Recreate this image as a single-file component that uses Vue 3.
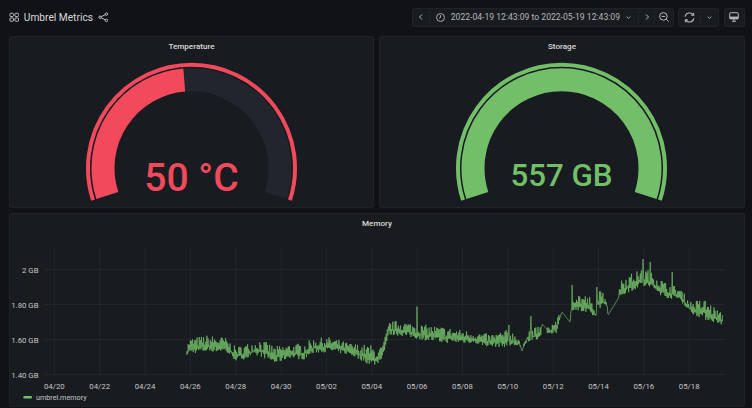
<template>
  <main class="dash">
    <header class="topbar">
      <div class="title-wrap">
        <svg class="ic-apps" viewBox="0 0 12 12">
          <rect x="1" y="1.4" width="4.2" height="3.8" rx="1.2" />
          <rect x="6.8" y="1.4" width="4.2" height="3.8" rx="1.2" />
          <rect x="1" y="6.8" width="4.2" height="3.8" rx="1.2" />
          <rect x="6.8" y="6.8" width="4.2" height="3.8" rx="1.2" />
        </svg>
        <h1>Umbrel Metrics</h1>
        <svg class="ic-share" viewBox="0 0 12 12">
          <circle cx="9.6" cy="2.4" r="1.4" />
          <circle cx="2.4" cy="6" r="1.4" />
          <circle cx="9.6" cy="9.6" r="1.4" />
          <path d="M3.7 5.3 8.3 3.1M3.7 6.7 8.3 8.9" />
        </svg>
      </div>
      <div class="tools">
        <div class="group">
          <button class="seg seg-arrow">
            <svg viewBox="0 0 10 10"><path d="M6 2.5 3.5 5 6 7.5" /></svg>
          </button>
          <button class="seg seg-range">
            <svg class="ic-clock" viewBox="0 0 12 12">
              <circle cx="6" cy="6" r="4.3" />
              <path d="M6 3.5V6L4.4 7" />
            </svg>
            <span>2022-04-19 12:43:09 to 2022-05-19 12:43:09</span>
            <svg class="ic-chev" viewBox="0 0 10 10"><path d="M3 4 5 6 7 4" /></svg>
          </button>
          <button class="seg seg-arrow">
            <svg viewBox="0 0 10 10"><path d="M4 2.5 6.5 5 4 7.5" /></svg>
          </button>
          <button class="seg seg-zoom">
            <svg viewBox="0 0 12 12">
              <circle cx="5.4" cy="5.4" r="3.8" />
              <path d="M3.6 5.4H7.2M8.2 8.2 10.6 10.6" />
            </svg>
          </button>
        </div>
        <div class="group">
          <button class="seg seg-refresh">
            <svg viewBox="0 0 12 12">
              <path d="M2 5.2A4.1 4.1 0 0 1 9.4 3.6M10 6.8A4.1 4.1 0 0 1 2.6 8.4" />
              <path d="M9.8 1.6V3.9H7.5M2.2 10.4V8.1H4.5" />
            </svg>
          </button>
          <button class="seg seg-more">
            <svg class="ic-chev" viewBox="0 0 10 10"><path d="M3 4 5 6 7 4" /></svg>
          </button>
        </div>
        <div class="group">
          <button class="seg seg-tv">
            <svg viewBox="0 0 12 12">
              <rect x="1.7" y="1.7" width="8.6" height="6.2" rx="1" />
              <path class="tv-band" d="M1.7 5.6H10.3V7.9H1.7Z" />
              <path d="M4 10.3H8M6 8V10.3" />
            </svg>
          </button>
        </div>
      </div>
    </header>

    <section class="gauges">
      <article v-for="g in gauges" :key="g.title" class="panel gauge-panel">
        <h2>{{ g.title }}</h2>
        <svg class="gauge" viewBox="0 0 365 172">
          <path :d="ring" class="g-ring" :stroke="g.color" />
          <path :d="track" class="g-bar" stroke="#22252b" />
          <path :d="g.bar" class="g-bar" :stroke="g.color" />
          <text x="182.5" :y="g.base" :font-size="g.size" :fill="g.color" text-anchor="middle">{{ g.value }}</text>
        </svg>
      </article>
    </section>

    <section class="panel chart-panel">
      <h2>Memory</h2>
      <svg class="chart" viewBox="0 0 736 194">
        <g class="grid">
          <path v-for="x in gridX" :key="x.label" :d="`M${x.pos} 34V164`" />
          <path v-for="y in gridY" :key="y.label" :d="`M36 ${y.pos}H715.5`" />
        </g>
        <text v-for="y in gridY" :key="y.label" :x="29.5" :y="y.pos + 3" class="tick" text-anchor="end">{{ y.label }}</text>
        <text v-for="x in gridX" :key="x.label" :x="x.pos" y="175.5" class="tick" text-anchor="middle">{{ x.label }}</text>
        <path :d="series" class="line" />
        <rect x="14.3" y="183" width="8.7" height="2.5" rx="1.2" fill="#73bf69" />
        <text x="27" y="187.3" class="tick legend">umbrel.memory</text>
      </svg>
    </section>
  </main>
</template>

<script setup>
// gauge geometry, in panel coordinates
const cx = 182.5;
const cy = 132.2;

function polar(r, deg) {
  const a = (deg * Math.PI) / 180;
  return [cx + r * Math.sin(a), cy - r * Math.cos(a)];
}

function arc(r, from, to) {
  const [x1, y1] = polar(r, from);
  const [x2, y2] = polar(r, to);
  const large = to - from > 180 ? 1 : 0;
  return `M${x1.toFixed(2)} ${y1.toFixed(2)}A${r} ${r} 0 ${large} 1 ${x2.toFixed(2)} ${y2.toFixed(2)}`;
}

const ring = arc(103.5, -108, 108);
const track = arc(88.5, -108, 108);

const gauges = [
  { title: 'Temperature', value: '50 °C', size: 39, base: 155, color: '#f2495c', bar: arc(88.5, -108, -4.7) },
  { title: 'Storage', value: '557 GB', size: 31.3, base: 150, color: '#73bf69', bar: arc(88.5, -108, 108) },
];

const xLabels = ['04/20', '04/22', '04/24', '04/26', '04/28', '04/30', '05/02', '05/04', '05/06', '05/08', '05/10', '05/12', '05/14', '05/16', '05/18'];
const gridX = xLabels.map((label, i) => ({ label, pos: 45.3 + i * 45.35 }));
const gridY = [
  { label: '2 GB', pos: 56.5 },
  { label: '1.80 GB', pos: 91.5 },
  { label: '1.60 GB', pos: 126.5 },
  { label: '1.40 GB', pos: 161.5 },
];

// rough envelope of the memory series: x, top, bottom (page coordinates)
const envelope = [
  [186, 353, 356], [189, 338, 354], [207, 335, 352], [225, 337, 352], [236, 347, 361],
  [260, 339, 356], [275, 346, 364], [290, 344, 358], [303, 343, 360], [315, 338, 353],
  [330, 337, 352], [350, 343, 355], [372, 345, 366], [378, 350, 364], [383, 344, 356],
  [389, 322, 335], [400, 320, 336], [417, 324, 339], [440, 326, 343], [470, 331, 343],
  [490, 334, 347], [510, 329, 347], [519, 337, 346], [522, 351, 351], [527, 329, 343],
  [541, 326, 338], [542, 324, 324], [546, 328, 328], [548, 327, 336], [556, 318, 334],
  [562, 312, 312], [570, 322, 322], [572, 290, 310], [590, 296, 316], [596, 316, 316],
  [598, 290, 308], [607, 294, 308], [608, 315, 315], [618, 299, 299], [621, 277, 297],
  [640, 270, 287], [650, 268, 289], [665, 282, 298], [680, 288, 300], [690, 301, 313],
  [705, 299, 320], [723, 314, 325],
];
const spikes = [[417, 306.5], [643, 259], [650, 262], [572, 285], [597, 287], [509, 325], [531, 316], [672, 272]];

function buildSeries() {
  let seed = 7;
  const rnd = () => {
    seed = (seed * 16807) % 2147483647;
    return seed / 2147483647;
  };
  const pts = [];
  let k = 0;
  let up = false;
  for (let x = 186; x <= 723; x += 0.55) {
    while (k < envelope.length - 2 && envelope[k + 1][0] < x) k++;
    const a = envelope[k];
    const b = envelope[k + 1];
    const t = Math.min(1, (x - a[0]) / (b[0] - a[0]));
    const top = a[1] + (b[1] - a[1]) * t;
    const bottom = a[2] + (b[2] - a[2]) * t;
    // zigzag between the lower part and the upper part of the band
    up = !up;
    const h = up ? 0.35 + rnd() * 0.65 : rnd() * 0.35;
    let y = bottom - (bottom - top) * h;
    const spike = spikes.find((s) => Math.abs(s[0] - x) < 0.3);
    if (spike) y = spike[1];
    // chart svg starts at page (9, 213)
    pts.push(`${(x - 9).toFixed(1)} ${(y - 213).toFixed(1)}`);
  }
  return pts;
}

const series = 'M' + buildSeries().join('L');
</script>

<style scoped>
.dash {
  width: 752px;
  height: 408px;
  overflow: hidden;
  background: #111217;
  padding: 0 7px 0 9px;
  box-sizing: border-box;
  font-family: Roboto, "Liberation Sans", sans-serif;
  color: #d8d9da;
}
.topbar {
  height: 36px;
  display: flex;
  justify-content: space-between;
  align-items: flex-start;
  padding-top: 8px;
  box-sizing: border-box;
}
.title-wrap {
  display: flex;
  align-items: center;
  height: 19px;
}
.ic-apps {
  width: 10.5px;
  height: 10.5px;
  margin-left: -0.5px;
  fill: none;
  stroke: #c7c8ca;
  stroke-width: 1.1;
}
h1 {
  margin: 0 0 0 4.8px;
  font-size: 10.2px;
  font-weight: 400;
  color: #d8d9da;
}
.ic-share {
  width: 10.5px;
  height: 10.5px;
  margin-left: 5px;
  fill: none;
  stroke: #c7c8ca;
  stroke-width: 1.1;
}
.tools {
  display: flex;
  gap: 4.6px;
}
.group {
  display: flex;
  height: 18.7px;
  background: #181b1f;
  border: 1px solid #1f2226;
  border-radius: 2px;
  box-sizing: border-box;
}
.seg {
  display: flex;
  align-items: center;
  justify-content: center;
  padding: 0;
  border: none;
  border-left: 1px solid #1f2226;
  background: none;
  color: #b7b8bb;
  box-sizing: border-box;
  font: inherit;
  flex-shrink: 0;
}
.seg:first-child {
  border-left: none;
}
.seg svg {
  fill: none;
  stroke: #b7b8bb;
  stroke-width: 1;
  flex-shrink: 0;
}
.seg-arrow {
  width: 15.8px;
}
.seg-arrow svg {
  width: 10px;
  height: 10px;
}
.seg-range {
  width: 209px;
  justify-content: flex-start;
  padding-left: 5px;
  font-size: 8.6px;
  white-space: nowrap;
}
.ic-clock {
  width: 11px;
  height: 11px;
  margin-right: 4.5px;
}
.seg .ic-chev {
  width: 9px;
  height: 9px;
}
.seg-range .ic-chev {
  margin-left: auto;
  margin-right: 5.3px;
}
.seg-zoom {
  width: 18.7px;
}
.seg-zoom svg,
.seg-tv svg {
  width: 12px;
  height: 12px;
}
.seg-refresh svg {
  width: 13px;
  height: 13px;
}
.seg .tv-band {
  fill: #b7b8bb;
  stroke: none;
}
.seg-refresh {
  width: 21px;
}
.seg-more {
  width: 17.7px;
}
.seg-tv {
  width: 19.4px;
}
.panel {
  background: #181b1f;
  border: 1px solid #1f2226;
  border-radius: 2px;
  box-sizing: border-box;
  position: relative;
}
.panel h2 {
  margin: 0;
  padding-top: 4px;
  text-align: center;
  font-size: 8.1px;
  line-height: 11px;
  font-weight: 500;
  color: #d8d9da;
}
.gauges {
  display: grid;
  grid-template-columns: 365px 366px;
  gap: 5px;
}
.gauge-panel {
  height: 172px;
}
.gauge {
  position: absolute;
  left: -1px;
  top: -1px;
  width: 365px;
  height: 172px;
}
.gauge text {
  font-family: Roboto, "Liberation Sans", sans-serif;
  font-weight: 500;
}
.g-ring {
  fill: none;
  stroke-width: 4;
}
.g-bar {
  fill: none;
  stroke-width: 23;
}
.chart-panel {
  height: 194px;
  margin-top: 5px;
}
.chart {
  position: absolute;
  left: -1px;
  top: -1px;
  width: 736px;
  height: 194px;
}
.grid path {
  fill: none;
  stroke: #23262b;
  stroke-width: 1;
}
.tick {
  font-family: Roboto, "Liberation Sans", sans-serif;
  font-size: 7.8px;
  fill: #c7c8ca;
}
.legend {
  font-size: 7.2px;
}
.line {
  fill: none;
  stroke: #73bf69;
  stroke-width: 0.7;
}
</style>

<style>
html,
body {
  margin: 0;
  background: #111217;
}
</style>
